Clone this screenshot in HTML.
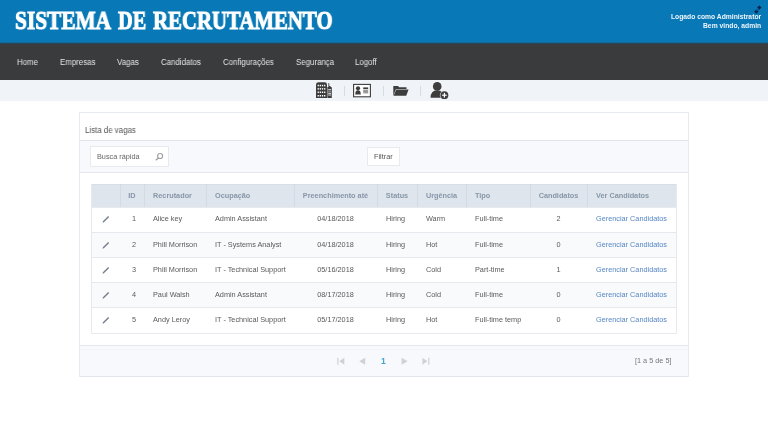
<!DOCTYPE html>
<html><head><meta charset="utf-8">
<style>
*{margin:0;padding:0;box-sizing:border-box}
html,body{width:768px;height:432px;overflow:hidden;background:#fff;font-family:"Liberation Sans",sans-serif;position:relative}
div{position:absolute;white-space:nowrap;will-change:transform}
#hdr{left:0;top:0;width:768px;height:43px;background:#0878b6}
.title{top:7.3px;font-family:"Liberation Serif",serif;font-weight:bold;font-size:24.5px;line-height:28px;color:#fff;transform:scaleX(0.849);transform-origin:0 0;-webkit-text-stroke:1px #fff}
#login{right:6.5px;top:12.5px;text-align:right;color:#eef6fc;font-weight:bold;font-size:6.75px;line-height:8.6px}
#expand{left:753px;top:5px}
#nav{left:0;top:43px;width:768px;height:37px;background:#3a3b3d}
#nav div{top:14.2px;color:#e4e4e4;font-size:8.3px;line-height:10px;transform:scaleX(0.95);transform-origin:0 0}
#strip{left:0;top:80px;width:768px;height:21px;background:#f0f4f8}
.isep{width:1px;height:10px;top:85.5px;background:#d9dcdf}
#panel{left:79px;top:112px;width:610px;height:265px;border:1px solid #e6e9ed;background:#fff}
#ptitle{left:84.7px;top:125px;font-size:8.3px;line-height:10px;color:#555;transform:scaleX(0.95);transform-origin:0 0}
#tool{left:80px;top:140px;width:608px;height:32.5px;background:#f7f9fc;border-top:1px solid #e0e4e8;border-bottom:1px solid #e4e8ec}
#search{left:90px;top:146px;width:79px;height:20.5px;background:#fff;border:1px solid #e8ebee}
#stext{left:96.7px;top:151.7px;font-size:7.3125px;line-height:10px;color:#666}
#filtrar{left:367px;top:147px;width:33px;height:19px;background:#fff;border:1px solid #e8ebee}
#ftext{left:374px;top:152px;font-size:7.3125px;line-height:10px;color:#555}
#tframe{left:91px;top:184px;width:586px;height:150px;border:1px solid #e6eaee;border-top:none}
#thead{background:#dee5ec;border-top:1px solid #d6dee6}
.vsep{width:1px;background:#d2dae3}
.th{font-weight:bold;color:#8796a8;font-size:7.3125px}
.td{font-size:7.3125px;color:#5a5a5a}
.trow{left:91px;width:585px;height:25.1px;border-top:1px solid #e6eaee}
.lnk{color:#5787c4}
.pen{vertical-align:middle;margin-top:-2px}
#foot{left:80px;top:345px;width:608px;height:32px;background:#f7f9fc;border-top:1px solid #e4e8ec;border-bottom:1px solid #e2e6ea}
#foot2{left:80px;top:349px;width:608px;height:1px;background:#f1f4f7}
#pcount{left:634.5px;top:355.5px;font-size:7.3125px;line-height:10px;color:#777}
#pone{left:380.7px;top:356.3px;font-size:8.6px;line-height:10px;color:#3fa7cf;font-weight:bold}
</style></head>
<body>
<div id="hdr">
  <div class="title" style="left:15px;transform:scaleX(0.871)">SISTEMA</div><div class="title" style="left:118px;transform:scaleX(0.83)">DE</div><div class="title" style="left:153px">RECRUTAMENTO</div>
  <div id="login">Logado como Administrator<br>Bem vindo, admin</div>
  <div style="left:758.3px;top:6px;width:2.6px;height:2.6px;background:#0b2148;transform:rotate(45deg)"></div><div style="left:754.8px;top:10px;width:2.8px;height:2.8px;background:#0b2148;transform:rotate(45deg)"></div><div style="left:756.6px;top:7.6px;width:1px;height:4px;background:#1b4a78;transform:rotate(45deg)"></div>
</div>
<div id="nav">
  <div style="left:17px">Home</div>
  <div style="left:60px">Empresas</div>
  <div style="left:117px">Vagas</div>
  <div style="left:161px">Candidatos</div>
  <div style="left:222.5px">Configurações</div>
  <div style="left:295.5px">Segurança</div>
  <div style="left:355px">Logoff</div>
</div>
<div style="left:0;top:42px;width:768px;height:1px;background:#146a98"></div><div style="left:0;top:43px;width:768px;height:1px;background:#24475a"></div>
<div id="strip"></div>
<!-- toolbar icons -->
<svg style="position:absolute;left:314px;top:81px" width="20" height="19" viewBox="0 0 20 19">
  <path d="M2 17 L2 3.5 Q2 1.2 4.5 1.2 L10.5 1.2 Q13 1.2 13 3.5 L13 17 Z" fill="#3d3d3d"/>
  <path d="M13.4 17 L13.4 6 L14.4 6 L14.4 2 L15.2 2 L15.2 4.6 L17.8 6.6 L17.8 17 Z" fill="#3d3d3d"/>
  <g fill="#fff"><rect x="3.6" y="3.8" width="1.3" height="1.5"/><rect x="5.7" y="3.8" width="1.3" height="1.5"/><rect x="7.85" y="3.8" width="1.3" height="1.5"/><rect x="10.05" y="3.8" width="1.3" height="1.5"/><rect x="3.6" y="7.1" width="1.3" height="1.5"/><rect x="5.7" y="7.1" width="1.3" height="1.5"/><rect x="7.85" y="7.1" width="1.3" height="1.5"/><rect x="10.05" y="7.1" width="1.3" height="1.5"/><rect x="3.6" y="10.5" width="1.3" height="1.5"/><rect x="5.7" y="10.5" width="1.3" height="1.5"/><rect x="7.85" y="10.5" width="1.3" height="1.5"/><rect x="10.05" y="10.5" width="1.3" height="1.5"/><rect x="3.6" y="14.0" width="1.3" height="1.5"/><rect x="5.7" y="14.0" width="1.3" height="1.5"/><rect x="7.85" y="14.0" width="1.3" height="1.5"/><rect x="10.05" y="14.0" width="1.3" height="1.5"/></g>
  <g fill="#8a8a8a"><rect x="14.2" y="9.5" width="2.8" height="2"/><rect x="14.2" y="13" width="2.8" height="2"/></g>
  <g fill="#eee"><rect x="14.2" y="8" width="2.8" height="0.8"/><rect x="14.2" y="12" width="2.8" height="0.8"/></g>
</svg>
<div class="isep" style="left:344px"></div>
<svg style="position:absolute;left:352px;top:83px" width="20" height="15" viewBox="0 0 20 15">
  <rect x="1.6" y="1.4" width="16.8" height="12.4" fill="#fff" stroke="#3d3d3d" stroke-width="1.1"/>
  <circle cx="6" cy="5.3" r="2.1" fill="#3d3d3d"/>
  <path d="M3.2 11.6 Q3.2 7.3 6 7.3 Q8.8 7.3 8.8 11.6 Z" fill="#3d3d3d"/>
  <rect x="11.2" y="4.4" width="5" height="1.7" fill="#3d3d3d"/>
  <rect x="11.2" y="6.7" width="5" height="3.7" fill="#9a9a9a"/>
</svg>
<div class="isep" style="left:383px"></div>
<svg style="position:absolute;left:392px;top:84px" width="18" height="13" viewBox="0 0 18 13">
  <path d="M1.3 11.8 L1.3 2 L6 2 L7.2 3.2 L14.5 3.2 L14.5 5 L4 5 L1.3 11.8 Z" fill="#3d3d3d"/>
  <path d="M1.5 11.8 L4.3 5.6 L16.6 5.6 L14.2 11.8 Z" fill="#3d3d3d"/>
</svg>
<div class="isep" style="left:420px"></div>
<svg style="position:absolute;left:428px;top:80px" width="22" height="20" viewBox="0 0 22 20">
  <circle cx="9.2" cy="6.4" r="4.3" fill="#3d3d3d"/>
  <path d="M2.6 17.8 Q2.6 10.2 9.2 10.2 Q15.8 10.2 15.8 17.8 Z" fill="#3d3d3d"/>
  <circle cx="16.4" cy="15.2" r="4.5" fill="#e8ecf0"/>
  <circle cx="16.4" cy="15.2" r="3.9" fill="#3d3d3d"/>
  <rect x="15.8" y="12.9" width="1.2" height="4.6" fill="#fff"/>
  <rect x="14.1" y="14.6" width="4.6" height="1.2" fill="#fff"/>
</svg>

<div id="panel"></div>
<div id="ptitle">Lista de vagas</div>
<div id="tool"></div>
<div id="search"></div>
<div id="stext">Busca rápida</div>
<svg style="position:absolute;left:154px;top:151px" width="10" height="10" viewBox="0 0 10 10">
  <circle cx="6.1" cy="5.0" r="2.5" fill="none" stroke="#a0a0a0" stroke-width="1.2"/>
  <path d="M4.3 6.9 L1.8 9.2" stroke="#a0a0a0" stroke-width="1.3"/>
</svg>
<div id="filtrar"></div>
<div id="ftext">Filtrar</div>

<div id="thead" style="left:91px;top:184px;width:585px;height:23px"></div>
<div class="vsep" style="left:120px;top:184px;height:23px"></div>
<div class="vsep" style="left:144px;top:184px;height:23px"></div>
<div class="vsep" style="left:206px;top:184px;height:23px"></div>
<div class="vsep" style="left:294px;top:184px;height:23px"></div>
<div class="vsep" style="left:377px;top:184px;height:23px"></div>
<div class="vsep" style="left:417px;top:184px;height:23px"></div>
<div class="vsep" style="left:466px;top:184px;height:23px"></div>
<div class="vsep" style="left:530px;top:184px;height:23px"></div>
<div class="vsep" style="left:587px;top:184px;height:23px"></div>
<div class="th" style="left:91px;top:184px;width:29px;height:23px;line-height:23px;text-align:center"></div>
<div class="th" style="left:120px;top:184px;width:24px;height:23px;line-height:23px;text-align:center">ID</div>
<div class="th" style="left:153.3px;top:184px;width:52.7px;height:23px;line-height:23px">Recrutador</div>
<div class="th" style="left:215.3px;top:184px;width:78.7px;height:23px;line-height:23px">Ocupação</div>
<div class="th" style="left:294px;top:184px;width:83px;height:23px;line-height:23px;text-align:center">Preenchimento até</div>
<div class="th" style="left:377px;top:184px;width:40px;height:23px;line-height:23px;text-align:center">Status</div>
<div class="th" style="left:417px;top:184px;width:49px;height:23px;line-height:23px;text-align:center">Urgência</div>
<div class="th" style="left:475.3px;top:184px;width:54.7px;height:23px;line-height:23px">Tipo</div>
<div class="th" style="left:530px;top:184px;width:57px;height:23px;line-height:23px;text-align:center">Candidatos</div>
<div class="th" style="left:596.3px;top:184px;width:79.7px;height:23px;line-height:23px">Ver Candidatos</div>
<div class="trow" style="top:207.00px;background:#ffffff"></div>
<div class="td" style="left:91px;top:206.4px;width:29px;height:25.1px;line-height:25.1px;text-align:center"><svg class="pen" width="10" height="10" viewBox="0 0 10 10"><path d="M1.6 9.7 L1.9 8.3 L7.2 3.0 L8.2 4.0 L2.9 9.3 Z" fill="#737e8b"/></svg></div>
<div class="td" style="left:121.5px;top:206.4px;width:24.0px;height:25.1px;line-height:25.1px;text-align:center">1</div>
<div class="td" style="left:152.7px;top:206.4px;width:53.3px;height:25.1px;line-height:25.1px">Alice key</div>
<div class="td" style="left:214.7px;top:206.4px;width:79.3px;height:25.1px;line-height:25.1px">Admin Assistant</div>
<div class="td" style="left:294px;top:206.4px;width:83px;height:25.1px;line-height:25.1px;text-align:center">04/18/2018</div>
<div class="td" style="left:385.7px;top:206.4px;width:31.3px;height:25.1px;line-height:25.1px">Hiring</div>
<div class="td" style="left:425.7px;top:206.4px;width:40.3px;height:25.1px;line-height:25.1px">Warm</div>
<div class="td" style="left:474.7px;top:206.4px;width:55.3px;height:25.1px;line-height:25.1px">Full-time</div>
<div class="td" style="left:530px;top:206.4px;width:57px;height:25.1px;line-height:25.1px;text-align:center">2</div>
<div class="td" style="left:595.7px;top:206.4px;width:80.3px;height:25.1px;line-height:25.1px"><span class="lnk">Gerenciar Candidatos</span></div>
<div class="trow" style="top:232.10px;background:#f8fafc"></div>
<div class="td" style="left:91px;top:231.5px;width:29px;height:25.1px;line-height:25.1px;text-align:center"><svg class="pen" width="10" height="10" viewBox="0 0 10 10"><path d="M1.6 9.7 L1.9 8.3 L7.2 3.0 L8.2 4.0 L2.9 9.3 Z" fill="#737e8b"/></svg></div>
<div class="td" style="left:121.5px;top:231.5px;width:24.0px;height:25.1px;line-height:25.1px;text-align:center">2</div>
<div class="td" style="left:152.7px;top:231.5px;width:53.3px;height:25.1px;line-height:25.1px">Phill Morrison</div>
<div class="td" style="left:214.7px;top:231.5px;width:79.3px;height:25.1px;line-height:25.1px">IT - Systems Analyst</div>
<div class="td" style="left:294px;top:231.5px;width:83px;height:25.1px;line-height:25.1px;text-align:center">04/18/2018</div>
<div class="td" style="left:385.7px;top:231.5px;width:31.3px;height:25.1px;line-height:25.1px">Hiring</div>
<div class="td" style="left:425.7px;top:231.5px;width:40.3px;height:25.1px;line-height:25.1px">Hot</div>
<div class="td" style="left:474.7px;top:231.5px;width:55.3px;height:25.1px;line-height:25.1px">Full-time</div>
<div class="td" style="left:530px;top:231.5px;width:57px;height:25.1px;line-height:25.1px;text-align:center">0</div>
<div class="td" style="left:595.7px;top:231.5px;width:80.3px;height:25.1px;line-height:25.1px"><span class="lnk">Gerenciar Candidatos</span></div>
<div class="trow" style="top:257.20px;background:#ffffff"></div>
<div class="td" style="left:91px;top:256.6px;width:29px;height:25.1px;line-height:25.1px;text-align:center"><svg class="pen" width="10" height="10" viewBox="0 0 10 10"><path d="M1.6 9.7 L1.9 8.3 L7.2 3.0 L8.2 4.0 L2.9 9.3 Z" fill="#737e8b"/></svg></div>
<div class="td" style="left:121.5px;top:256.6px;width:24.0px;height:25.1px;line-height:25.1px;text-align:center">3</div>
<div class="td" style="left:152.7px;top:256.6px;width:53.3px;height:25.1px;line-height:25.1px">Phill Morrison</div>
<div class="td" style="left:214.7px;top:256.6px;width:79.3px;height:25.1px;line-height:25.1px">IT - Technical Support</div>
<div class="td" style="left:294px;top:256.6px;width:83px;height:25.1px;line-height:25.1px;text-align:center">05/16/2018</div>
<div class="td" style="left:385.7px;top:256.6px;width:31.3px;height:25.1px;line-height:25.1px">Hiring</div>
<div class="td" style="left:425.7px;top:256.6px;width:40.3px;height:25.1px;line-height:25.1px">Cold</div>
<div class="td" style="left:474.7px;top:256.6px;width:55.3px;height:25.1px;line-height:25.1px">Part-time</div>
<div class="td" style="left:530px;top:256.6px;width:57px;height:25.1px;line-height:25.1px;text-align:center">1</div>
<div class="td" style="left:595.7px;top:256.6px;width:80.3px;height:25.1px;line-height:25.1px"><span class="lnk">Gerenciar Candidatos</span></div>
<div class="trow" style="top:282.30px;background:#f8fafc"></div>
<div class="td" style="left:91px;top:281.7px;width:29px;height:25.1px;line-height:25.1px;text-align:center"><svg class="pen" width="10" height="10" viewBox="0 0 10 10"><path d="M1.6 9.7 L1.9 8.3 L7.2 3.0 L8.2 4.0 L2.9 9.3 Z" fill="#737e8b"/></svg></div>
<div class="td" style="left:121.5px;top:281.7px;width:24.0px;height:25.1px;line-height:25.1px;text-align:center">4</div>
<div class="td" style="left:152.7px;top:281.7px;width:53.3px;height:25.1px;line-height:25.1px">Paul Walsh</div>
<div class="td" style="left:214.7px;top:281.7px;width:79.3px;height:25.1px;line-height:25.1px">Admin Assistant</div>
<div class="td" style="left:294px;top:281.7px;width:83px;height:25.1px;line-height:25.1px;text-align:center">08/17/2018</div>
<div class="td" style="left:385.7px;top:281.7px;width:31.3px;height:25.1px;line-height:25.1px">Hiring</div>
<div class="td" style="left:425.7px;top:281.7px;width:40.3px;height:25.1px;line-height:25.1px">Cold</div>
<div class="td" style="left:474.7px;top:281.7px;width:55.3px;height:25.1px;line-height:25.1px">Full-time</div>
<div class="td" style="left:530px;top:281.7px;width:57px;height:25.1px;line-height:25.1px;text-align:center">0</div>
<div class="td" style="left:595.7px;top:281.7px;width:80.3px;height:25.1px;line-height:25.1px"><span class="lnk">Gerenciar Candidatos</span></div>
<div class="trow" style="top:307.40px;background:#ffffff"></div>
<div class="td" style="left:91px;top:306.8px;width:29px;height:25.1px;line-height:25.1px;text-align:center"><svg class="pen" width="10" height="10" viewBox="0 0 10 10"><path d="M1.6 9.7 L1.9 8.3 L7.2 3.0 L8.2 4.0 L2.9 9.3 Z" fill="#737e8b"/></svg></div>
<div class="td" style="left:121.5px;top:306.8px;width:24.0px;height:25.1px;line-height:25.1px;text-align:center">5</div>
<div class="td" style="left:152.7px;top:306.8px;width:53.3px;height:25.1px;line-height:25.1px">Andy Leroy</div>
<div class="td" style="left:214.7px;top:306.8px;width:79.3px;height:25.1px;line-height:25.1px">IT - Technical Support</div>
<div class="td" style="left:294px;top:306.8px;width:83px;height:25.1px;line-height:25.1px;text-align:center">05/17/2018</div>
<div class="td" style="left:385.7px;top:306.8px;width:31.3px;height:25.1px;line-height:25.1px">Hiring</div>
<div class="td" style="left:425.7px;top:306.8px;width:40.3px;height:25.1px;line-height:25.1px">Hot</div>
<div class="td" style="left:474.7px;top:306.8px;width:55.3px;height:25.1px;line-height:25.1px">Full-time temp</div>
<div class="td" style="left:530px;top:306.8px;width:57px;height:25.1px;line-height:25.1px;text-align:center">0</div>
<div class="td" style="left:595.7px;top:306.8px;width:80.3px;height:25.1px;line-height:25.1px"><span class="lnk">Gerenciar Candidatos</span></div>
<div id="tframe"></div>

<div id="foot"></div><div id="foot2"></div>
<svg style="position:absolute;left:336px;top:357px" width="96" height="9" viewBox="0 0 96 9">
  <g fill="#cfd1d3">
    <rect x="1.3" y="0.8" width="1.2" height="7"/>
    <path d="M8.3 0.8 L8.3 7.8 L3.3 4.3 Z"/>
    <path d="M29.2 0.8 L29.2 7.8 L23.2 4.3 Z"/>
    <path d="M65.6 0.8 L65.6 7.8 L71.6 4.3 Z"/>
    <path d="M86.4 0.8 L86.4 7.8 L91.4 4.3 Z"/>
    <rect x="92.2" y="0.8" width="1.2" height="7"/>
  </g>
</svg>
<div id="pone">1</div>
<div id="pcount">[1 a 5 de 5]</div>
</body></html>
